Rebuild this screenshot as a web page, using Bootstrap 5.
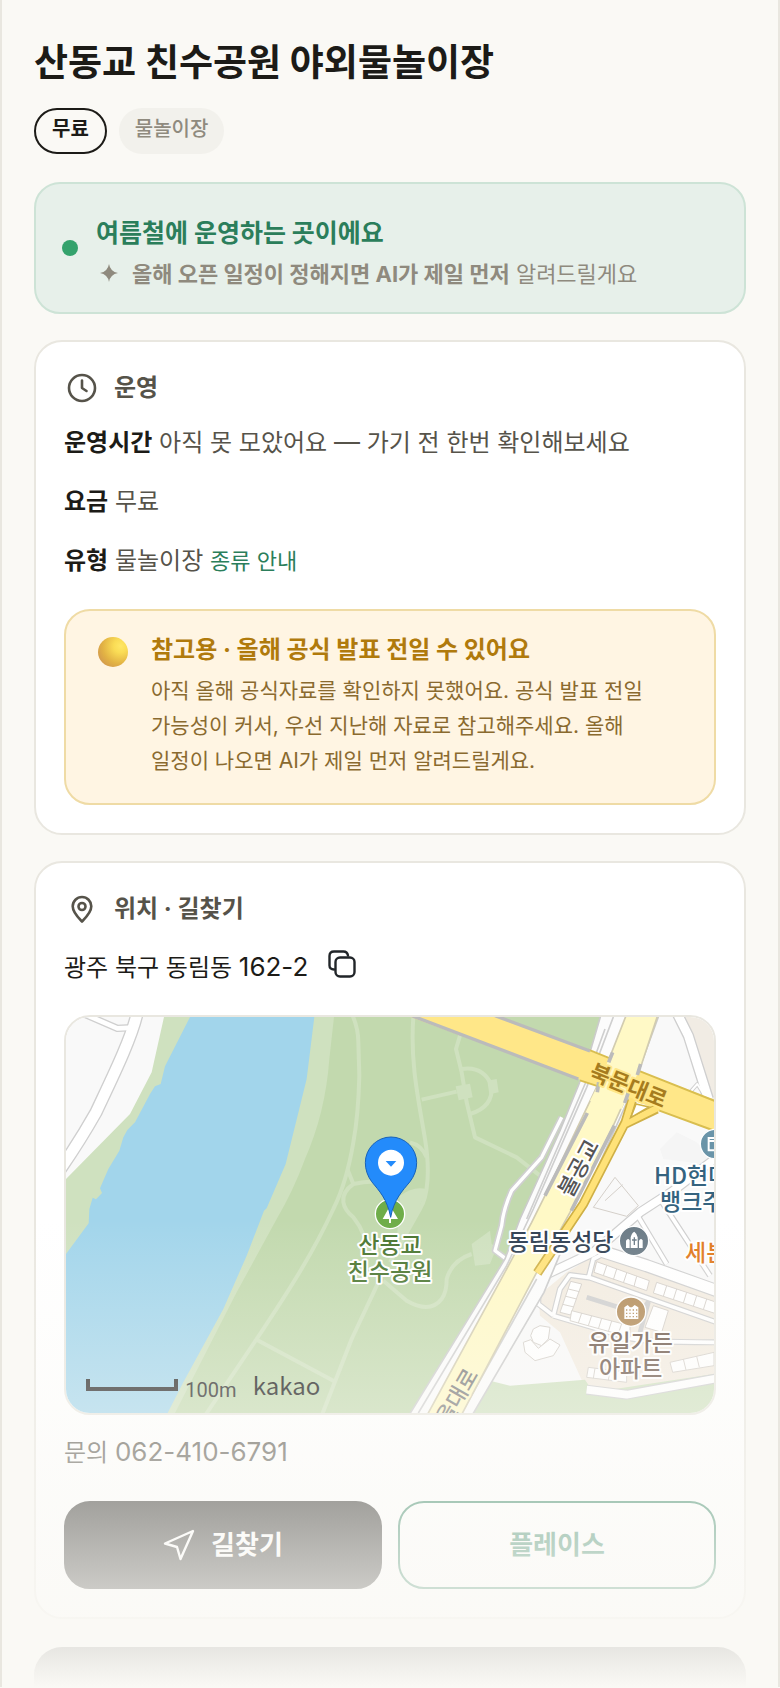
<!DOCTYPE html>
<html lang="ko">
<head>
<meta charset="utf-8">
<meta name="viewport" content="width=device-width, initial-scale=1">
<title>산동교 친수공원 야외물놀이장</title>
<link href="https://cdn.jsdelivr.net/npm/bootstrap@5.3.0/dist/css/bootstrap.min.css" rel="stylesheet">
<style>
  :root { --ink:#1c1b17; --ink-2:#56534a; --ink-3:#8f8a7e; --line:#e9e7e0; --paper:#faf9f5; --green:#2b7e5b; }
  body { background:var(--paper); color:var(--ink-2); font-family:Inter,"Noto Sans CJK KR",sans-serif; font-size:24px; line-height:36px; }
  .shell { border:solid var(--line); border-width:0 2px; padding:36px 32px 0; }
  h1 { font-size:37px; line-height:54px; font-weight:700; color:var(--ink); margin:0 0 18px; }
  .chips { gap:12px; }
  .chip { height:46px; padding:2px 16px; border-radius:23px; background:#f2f1ec; color:var(--ink-3); font-size:20px; line-height:38px; font-weight:500; }
  .chip-free { padding-top:0; border:2px solid var(--ink); background:none; color:var(--ink); font-weight:700; }
  .notice { margin-top:28px; padding:28px 26px 17px; background:#e7f0ea; border:2px solid #cde3d6; border-radius:26px; gap:18px; }
  .notice h2 { font-size:25px; line-height:42px; font-weight:700; color:var(--green); margin:0; }
  .notice p { font-size:22px; line-height:41px; color:var(--ink-3); margin:0; gap:14px; }
  .dot { width:16px; height:16px; border-radius:50%; background:#34a26c; margin-bottom:12px; }
  .panel { margin-top:26px; background:#fff; border:2px solid var(--line); border-radius:28px; padding:28px; }
  .panel h2 { font-size:24px; line-height:36px; font-weight:700; margin:0; gap:14px; }
  .facts { margin-top:7px; }
  .facts p { margin:0; line-height:59px; }
  .facts strong { color:var(--ink); }
  .facts a { font-size:22px; line-height:1; color:var(--green); text-decoration:none; }
  .caution { margin-top:19px; background:#fff5e3; border:2px solid #efdba5; border-radius:26px; padding:21px 48px 25px 32px; gap:23px; }
  .caution h3 { font-size:24px; line-height:36px; font-weight:700; color:#b07a0c; margin:0 0 5px; }
  .caution p { font-size:21px; line-height:35px; color:#8a6a2f; margin:0; word-break:keep-all; }
  .orb { width:30px; height:30px; margin-top:5px; border-radius:50%; background:radial-gradient(circle at 75% 30%,#ffe766 0,#fadc55 22%,#e2b244 58%,#d39a4d 82%,#dd8068 100%); }
  .num { font-size:26px; line-height:1; }
  .addr { color:var(--ink); margin-top:23px; gap:20px; }
  .map-frame { margin-top:29px; border:2px solid var(--line); border-radius:26px; overflow:hidden; height:400px; }
  .map-frame svg { display:block; width:100%; height:100%; font-family:"Noto Sans CJK KR",sans-serif; }
  .tel { margin:20px 0 30px; }
  .act { height:88px; border-radius:26px; font-size:26px; line-height:40px; font-weight:700; border-width:2px; }
  .act-go, .act-go:hover { background:var(--ink); border-color:var(--ink); color:#fff; gap:16px; }
  .act-place, .act-place:hover { background:#fff; border-color:var(--green); color:var(--green); }
  .next-block { margin-top:28px; height:40px; background:var(--ink); border-radius:28px 28px 0 0; }
  .fade-out { height:468px; background:linear-gradient(rgba(250,249,245,0),#faf9f5); pointer-events:none; }
  .ic { fill:none; stroke:currentColor; stroke-linecap:round; stroke-linejoin:round; }
  .lbl text { font-size:69px; font-weight:500; paint-order:stroke; stroke:#fff; stroke-width:12px; stroke-linejoin:round; }
  .lbl .road { font-size:66px; text-anchor:middle; dominant-baseline:central; stroke:#fff9c6; }
  .lbl .road-main { stroke:#ffe788; font-weight:700; }
  .lbl .road-bridge { stroke:#fff; }
</style>
</head>
<body>
<main class="shell position-relative overflow-hidden">
  <h1>산동교 친수공원 야외물놀이장</h1>
  <div class="chips d-flex">
    <span class="chip chip-free">무료</span>
    <span class="chip">물놀이장</span>
  </div>

  <section class="notice d-flex align-items-center">
    <span class="dot flex-shrink-0"></span>
    <div>
      <h2>여름철에 운영하는 곳이에요</h2>
      <p class="d-flex align-items-center"><svg class="ms-1 mb-1 flex-shrink-0" width="18" height="18" viewBox="0 0 18 18" fill="currentColor" aria-hidden="true"><path d="M9 0Q10.300 7.700 18 9Q10.300 10.300 9 18Q7.700 10.300 0 9Q7.700 7.700 9 0Z"/></svg><span><b>올해 오픈 일정이 정해지면 AI가 제일 먼저</b> 알려드릴게요</span></p>
    </div>
  </section>

  <section class="panel">
    <h2 class="d-flex align-items-center"><svg class="ic" width="36" height="36" viewBox="0 0 36 36" stroke-width="2.600" aria-hidden="true"><circle cx="18" cy="18" r="13"/><path d="M18 10.500V18l4.500 3"/></svg>운영</h2>
    <div class="facts">
      <p><strong>운영시간</strong> 아직 못 모았어요 <span class="num">—</span> 가기 전 한번 확인해보세요</p>
      <p><strong>요금</strong> 무료</p>
      <p><strong>유형</strong> 물놀이장 <a href="#types">종류 안내</a></p>
    </div>
    <div class="caution d-flex align-items-start">
      <span class="orb flex-shrink-0"></span>
      <div>
        <h3>참고용 · 올해 공식 발표 전일 수 있어요</h3>
        <p>아직 올해 공식자료를 확인하지 못했어요. 공식 발표 전일 가능성이 커서, 우선 지난해 자료로 참고해주세요. 올해 일정이 나오면 AI가 제일 먼저 알려드릴게요.</p>
      </div>
    </div>
  </section>

  <section class="panel">
    <h2 class="d-flex align-items-center"><svg class="ic" width="36" height="36" viewBox="0 0 36 36" stroke-width="2.600" aria-hidden="true"><path d="M18 30.500C14 26.500 8.700 21.500 8.700 15.300a9.300 9.300 0 0 1 18.600 0C27.300 21.500 22 26.500 18 30.500Z"/><circle cx="18" cy="15.500" r="3.500"/></svg>위치 · 길찾기</h2>
    <div class="addr d-flex align-items-start">
      <span>광주 북구 동림동 <span class="num">162-2</span></span>
      <button class="btn p-0 border-0 lh-1 d-flex" type="button" aria-label="주소 복사"><svg class="ic" width="28" height="28" viewBox="0 0 28 28" stroke-width="2.400" stroke="#1c1b17" aria-hidden="true"><rect x="7.500" y="7.500" width="19" height="19" rx="4.500"/><path d="M6 19.500C3 19.500 1.500 18 1.500 15.500V6C1.500 3 3 1.500 6 1.500h9.500C18 1.500 19.500 3 20 5.500"/></svg></button>
    </div>

    <div class="map-frame">
      <svg viewBox="18 24 1944 1188" preserveAspectRatio="xMidYMid slice" role="img" aria-label="산동교 친수공원 지도">
        <rect x="18" y="24" width="1944" height="1188" fill="#f9f9f9"/>
        <!-- left bank streets -->
        <g fill="none" stroke-linejoin="round">
          <path d="M70 14L172 58L215 56" stroke="#cfcfcf" stroke-width="22"/>
          <path d="M232 10C215 90 150 220 108 310Q60 395 0 482" stroke="#cfcfcf" stroke-width="40"/>
          <path d="M70 14L172 58L222 56" stroke="#fff" stroke-width="14"/>
          <path d="M232 10C215 90 150 220 108 310Q60 395 0 482" stroke="#fff" stroke-width="32"/>
        </g>
        <!-- banks, river, park -->
        <path fill="#cfe1bf" d="M312 24L275 190L210 315L18 510V740H500L830 24Z"/>
        <path fill="#cfe1bf" d="M700 24H840V450L700 700L400 1212H300Z"/>
        <path fill="#a2d5eb" d="M390 24L315 172L302 225L285 232L270 255L225 340L202 363L190 385L178 425L145 480L120 538L126 552L108 571L98 566L88 600L86 643L60 678L18 735V1212H323L370 1120L490 900L560 740L612 605L620 598L677 465L740 210L763 24Z"/>
        <path fill="#c2d9ae" d="M822 24L808 150C800 260 775 360 735 450Q700 545 650 630L530 850L345 1212H1060L1335 750L1400 600L1500 390L1560 220L1625 24Z"/>
        <!-- park paths -->
        <g fill="none" stroke="#cfe1bf" stroke-width="12" stroke-linejoin="round">
          <path d="M878 20Q895 60 895 100L898 200Q895 320 880 400Q860 520 820 600C760 730 690 840 590 990L435 1220"/>
          <path d="M862 480L880 525Q920 515 960 518M880 525C830 560 850 600 880 625Q900 650 912 680"/>
          <path d="M590 992L820 1115M955 820L875 990L785 1220"/>
          <path d="M970 815L1040 875Q1110 915 1145 870Q1160 850 1160 810Q1175 755 1235 735"/>
          <path d="M1060 24C1050 160 1075 270 1095 390C1110 480 1105 560 1080 600L990 760"/>
          <path d="M1050 400Q1085 408 1100 445"/>
          <path d="M1200 80L1188 120L1205 190L1220 280L1245 385L1370 445L1440 500"/>
          <path d="M1085 272L1190 248M1205 180Q1270 170 1295 230Q1300 295 1230 315"/>
        </g>
        <g fill="#cfe1bf">
          <path d="M1187 232L1230 224L1238 265L1196 274ZM1282 215L1310 210L1316 250L1288 256Z"/>
          <path d="M1020 560Q1060 530 1100 540L1060 640L1010 700Z"/>
          <path d="M1235 705L1290 665L1295 705L1310 715L1290 765L1245 770Z"/>
        </g>
        <!-- blocks on the east side -->
        <path fill="#f1ece4" d="M1875 24H1962V285L1945 260Z"/>
        <path fill="#f5f5f5" d="M1800 420L1850 370L1910 400L1962 450V510L1890 460L1810 450Z"/>
        <path fill="#f3ece1" d="M1435 860L1520 790L1610 735L1962 850V1110L1700 1160L1575 1135L1500 970L1440 920Z"/>
        <path fill="#cfe1bf" d="M1290 1115L1350 1130L1575 1112L1600 1150L1962 1095V1220H1230Z"/>
        <!-- grey lanes -->
        <g fill="none" stroke-linejoin="round">
          <g stroke="#cfcfcf">
            <path stroke-width="34" d="M1845 0L1885 80L1945 270"/>
            <path stroke-width="12" d="M1890 250L1912 225L1935 262"/>
            <path stroke-width="30" d="M1420 815L1600 730L1740 610L1840 545L1990 430"/>
            <path stroke-width="40" d="M1620 725L1760 770L1970 845"/>
            <path stroke-width="18" d="M1730 615L1820 765M1800 570L1950 800"/>
            <path stroke-width="18" d="M1585 808L1600 750L1620 740M1480 920L1435 885V850M1480 920L1500 840L1530 798L1590 806L1970 940M1480 920L1700 985Q1740 1000 1962 1000"/>
            <path stroke-width="30" d="M1580 1142L1700 1157L1970 1108"/>
            <path stroke-width="20" d="M1505 325L1445 445L1355 545Q1330 600 1325 650L1305 725L1345 755"/>
            <path stroke-width="14" d="M1580 865L1740 915L1770 870M1740 970L1765 880"/>
          </g>
          <g stroke="#fff">
            <path stroke-width="26" d="M1845 0L1885 80L1945 270"/>
            <path stroke-width="6" d="M1890 250L1912 225L1935 262"/>
            <path stroke-width="23" d="M1420 815L1600 730L1740 610L1840 545L1990 430"/>
            <path stroke-width="33" d="M1620 725L1760 770L1970 845"/>
            <path stroke-width="11" d="M1730 615L1820 765M1800 570L1950 800"/>
            <path stroke-width="11" d="M1585 808L1600 750L1620 740M1480 920L1435 885V850M1480 920L1500 840L1530 798L1590 806L1970 940M1480 920L1700 985Q1740 1000 1962 1000"/>
            <path stroke-width="23" d="M1580 1142L1700 1157L1970 1108"/>
            <path stroke-width="10" d="M1505 325L1445 445L1355 545Q1330 600 1325 650L1305 725L1345 755"/>
          </g>
        </g>
        <!-- buildings -->
        <g fill="#fff" stroke="#d5d0ca" stroke-width="3">
          <path d="M1610 758L1768 815L1760 845L1602 790ZM1640 770L1630 800M1670 780L1660 812M1700 792L1690 822M1730 802L1722 832"/>
          <path d="M1790 820L1970 880V915L1780 852ZM1820 830L1810 862M1850 840L1840 872M1880 850L1870 882M1910 860L1900 892M1940 870L1930 902"/>
          <path d="M1532 817L1565 825L1532 918L1500 910ZM1525 840L1558 848M1518 862L1550 870M1508 886L1542 894"/>
          <path d="M1535 905L1710 950V985L1530 935ZM1565 912L1555 942M1595 920L1585 950M1625 928L1615 960M1655 936L1645 968M1685 944L1675 974"/>
          <path d="M1780 890L1825 905L1805 970L1755 955Z"/>
          <path d="M1830 1060L1962 1030V1070L1838 1090ZM1870 1050L1878 1083M1910 1042L1918 1075"/>
          <path d="M1585 1075L1700 1090V1120L1580 1105ZM1605 1078L1600 1108M1650 1084L1645 1114"/>
          <path d="M1420 960L1440 950L1470 955L1465 990L1445 1010L1420 1000L1412 980Z"/>
          <path d="M1390 1000L1412 992L1435 1018L1470 990L1500 1008L1480 1040L1425 1055L1395 1030Z"/>
          <path fill="none" d="M1600 595L1665 505L1735 590L1700 622ZM1688 527L1635 575"/>
        </g>
        <!-- trunk road with service lanes -->
        <path fill="#fcfcfc" stroke="#cbcbcb" stroke-width="5" d="M1625 10L1590 130L1557 225L1500 365L1380 630L1335 750L1040 1230H1230L1452 850L1540 640L1705 270L1800 10Z"/>
        <g fill="none" stroke="#cfcfcf" stroke-width="5"><path d="M1660 24L1580 235L1420 600L1340 770L1075 1212M1635 60L1575 225L1400 630"/><path d="M1430 810L1205 1212"/></g>
        <path fill="#fff9c6" stroke="#d2ccb0" stroke-width="5" d="M1702 10L1655 130L1612 230L1455 560L1415 640L1340 780L1095 1230H1198L1430 790L1530 610L1660 350L1705 250L1745 165L1796 10Z"/>
        <!-- cross road -->
        <path fill="#ffe788" d="M1040 20L1555 210L1610 232L1970 370V275L1740 187L1590 126L1290 14Z"/>
        <path fill="none" stroke="#d9be4f" stroke-width="6" d="M1585 122L1650 148M1560 214L1615 232M1735 185L1970 278M1790 302L1970 368"/>
        <path fill="none" stroke="#bbb" stroke-width="10" d="M1055 20L1555 210M1305 20L1590 126"/>
        <!-- slip road -->
        <g fill="none" stroke-linejoin="round"><path stroke="#cfb046" stroke-width="29" d="M1716 275L1696 340L1570 585L1432 792M1790 300L1696 345"/><path stroke="#ffe278" stroke-width="19" d="M1718 268L1696 340L1570 585L1432 792M1795 296L1696 345"/></g>
        <path fill="#fff" stroke="#cfb046" stroke-width="5" d="M1728 285L1767 294L1712 326Z"/>
        <path fill="#fff9c6" d="M1655 130L1612 232L1590 275L1685 300L1710 240L1740 180Z"/>
        <path fill="none" stroke="#bbb" stroke-width="11" d="M1658 130L1646 160M1616 220L1612 250M1742 165L1732 198M1706 248L1694 282M1582 312L1455 560M1663 350L1534 605"/>

        <g class="lbl">
          <text class="road road-main" transform="translate(1708 224) rotate(22)" fill="#a67c1e">북문대로</text>
          <text class="road road-bridge" transform="translate(1550 474) rotate(-62)" fill="#555">불공교</text>
          <text class="road" transform="translate(1185 1160) rotate(-60)" fill="#777">을대로</text>
          <text x="1343" y="724" fill="#2f3f52">동림동성당</text>
          <text x="1782" y="524" fill="#35637f">HD현대</text>
          <text x="1800" y="602" fill="#35637f">뱅크주</text>
          <text x="1875" y="756" fill="#e0781c">세븐</text>
          <text x="1712" y="1026" fill="#6d584b" text-anchor="middle">유일가든</text>
          <text x="1712" y="1104" fill="#6d584b" text-anchor="middle">아파트</text>
          <text x="990" y="732" fill="#49752f" text-anchor="middle">산동교</text>
          <text x="990" y="812" fill="#49752f" text-anchor="middle">친수공원</text>
        </g>
        <!-- place badges -->
        <g stroke="#fff" stroke-width="4">
          <circle cx="1965" cy="405" r="44" fill="#6a94a8"/><circle cx="1722" cy="696" r="44" fill="#6b7b86"/>
          <circle cx="1713" cy="908" r="44" fill="#b28b58"/><circle cx="990" cy="615" r="44" fill="#6fad49"/>
        </g>
        <path fill="none" stroke="#fff" stroke-width="6" d="M1970 387H1946V424H1970M1946 396H1970"/>
        <g fill="#fff">
          <path d="M1712 717V685Q1715 672 1723 668Q1731 674 1733 685V717ZM1698 717V695Q1704 686 1709 694V717ZM1737 717V695Q1742 686 1748 694V717Z"/>
          <path d="M1693 930V895L1703 888L1710 895H1716L1724 888L1735 895V930Z"/>
          <path d="M990 590L1014 630H993V642H987V630H968Z"/>
        </g>
        <path stroke="#6b7b86" stroke-width="4" d="M1723 685V708M1716 693H1730"/>
        <path stroke="#b28b58" stroke-width="4" stroke-dasharray="4 6" d="M1698 903H1732M1698 913H1732M1698 923H1732"/>
        <!-- pin -->
        <path fill="#238bfb" stroke="#1862b8" stroke-width="3" d="M992 625C982 570 957 545 935 518Q916 492 916 461A77 77 0 0 1 1070 461Q1070 492 1050 518C1028 545 1002 570 992 625Z"/>
        <circle cx="993" cy="461" r="39" fill="#fff"/><path fill="#238bfb" d="M977 456H1009L993 473Z"/>
        <!-- scale bar -->
        <path fill="none" stroke="#222" stroke-width="12" d="M84 1110V1140H348V1110"/>
        <text x="376" y="1164" fill="#222" style="font-family:Roboto,sans-serif;font-size:60px">100m</text>
        <text x="578" y="1158" fill="#111" style="font-size:72px">kakao</text>
      </svg>
    </div>

    <p class="tel">문의 <span class="num">062-410-6791</span></p>
    <div class="d-flex gap-3">
      <button type="button" class="btn act act-go d-flex align-items-center justify-content-center flex-fill w-50"><svg class="ic" width="32" height="32" viewBox="0 0 32 32" stroke-width="2.400" aria-hidden="true"><path d="M30 2L2 14.500L14 18L17.500 30Z"/></svg>길찾기</button>
      <button type="button" class="btn act act-place flex-fill w-50">플레이스</button>
    </div>
  </section>

  <div class="next-block"></div>
  <div class="fade-out position-absolute bottom-0 start-0 end-0"></div>
</main>
<script src="https://cdn.jsdelivr.net/npm/bootstrap@5.3.0/dist/js/bootstrap.bundle.min.js"></script>
</body>
</html>
